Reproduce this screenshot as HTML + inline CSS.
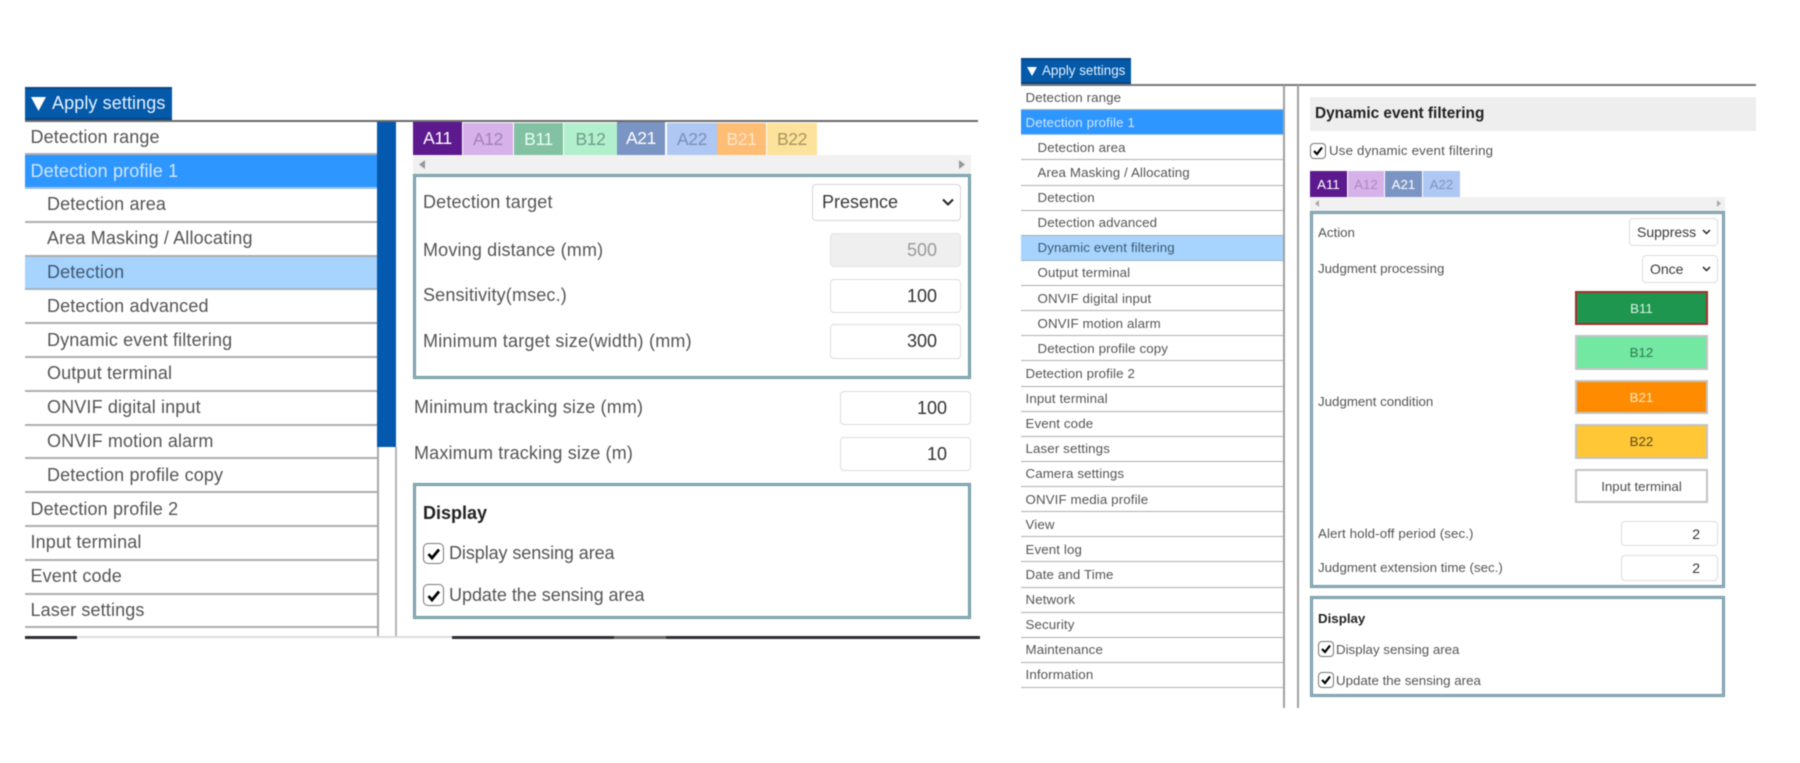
<!DOCTYPE html>
<html><head><meta charset="utf-8">
<style>
html,body{margin:0;padding:0;background:#fff}
#p{position:relative;width:1800px;height:763px;overflow:hidden;background:#fff;font-family:"Liberation Sans",sans-serif;color:#555;filter:blur(.4px)}
#p div{position:absolute;box-sizing:border-box;white-space:nowrap}
#p svg{position:absolute;overflow:visible}
.hd{background:#0459a8;border-top:2px solid #0a4584;border-bottom:2px solid #0a4584;color:#e9f3ff}
#p .r{display:flex;align-items:center;left:0;right:0;border-bottom:2px solid #aeaeae;position:relative}
#p .mn{display:block}
#p .r1{height:33.8px;font-size:18px;padding-left:5.5px;letter-spacing:.14px}
#p .r1.s{padding-left:22px}
#p .r2{height:25.13px;font-size:13.3px;padding-left:4.5px;letter-spacing:.12px;border-bottom-width:1.5px}
#p .r2.s{padding-left:16.5px}
#p .on{background:#2e96ff;color:#cfe7ff;border-bottom-color:#9cc2e6}
#p .lt{background:#a6d4ff;color:#3f5870;border-bottom-color:#a0b4c6}
#p .tab{display:flex;align-items:center;justify-content:center;letter-spacing:-.4px}
#p .box{border:3px solid #66939f;outline:1px solid #9fbcc4;outline-offset:-2px;background:#fff}
#p .lb{display:flex;align-items:center;height:24px}
#p .a{letter-spacing:.16px}
#p .ip{background:#fff;border:1.5px solid #dcdcdc;border-radius:4px;display:flex;align-items:center;justify-content:flex-end;color:#333}
#p .cb{background:#fff;border:1.5px solid #777;border-radius:5px}
#p .bt{display:flex;align-items:center;justify-content:center;font-size:13.3px;border:2px solid #c4c4c4}
</style></head><body>
<div id="p">

<!-- LEFT PANEL -->
<div class="hd" style="left:25px;top:87px;width:147px;height:33px"></div>
<svg style="left:31px;top:97px" width="15" height="14"><path d="M0 0H15L7.5 14Z" fill="#fff"/></svg>
<div style="left:52px;top:87px;height:33px;line-height:33px;font-size:18px;color:#e4f1ff;letter-spacing:.1px">Apply settings</div>
<div style="left:25px;top:120px;height:2px;background:#6a6a6a;width:953px"></div>

<div class="mn" style="left:25px;top:121.5px;width:352px;height:515px;overflow:hidden">
<div class="r r1">Detection range</div>
<div class="r r1 on">Detection profile 1</div>
<div class="r r1 s">Detection area</div>
<div class="r r1 s">Area Masking / Allocating</div>
<div class="r r1 s lt">Detection</div>
<div class="r r1 s">Detection advanced</div>
<div class="r r1 s">Dynamic event filtering</div>
<div class="r r1 s">Output terminal</div>
<div class="r r1 s">ONVIF digital input</div>
<div class="r r1 s">ONVIF motion alarm</div>
<div class="r r1 s">Detection profile copy</div>
<div class="r r1">Detection profile 2</div>
<div class="r r1">Input terminal</div>
<div class="r r1">Event code</div>
<div class="r r1">Laser settings</div>
</div>
<div style="left:377px;top:122px;width:1.5px;height:515px;background:#a8a8a8"></div>
<div style="left:377px;top:122px;width:19px;height:325px;background:#0459ae"></div>
<div style="left:395px;top:447px;width:1.5px;height:190px;background:#b5b5b5"></div>
<div style="left:25px;top:636px;width:52px;height:3px;background:#2b2f33"></div>
<div style="left:77px;top:636px;width:375px;height:2px;background:#dcdcdc"></div>
<div style="left:452px;top:636px;width:162px;height:3px;background:#2e3033"></div>
<div style="left:614px;top:636px;width:52px;height:3px;background:#6a6a6a"></div>
<div style="left:666px;top:636px;width:314px;height:3px;background:#2e3033"></div>

<!-- left tabs -->
<div class="tab" style="left:413px;top:122px;width:49px;height:33px;background:#5d1a8f;color:#fff;font-size:17.5px">A11</div>
<div class="tab" style="left:463px;top:123px;width:50px;height:32px;background:#d6b1ea;color:#a283b8;font-size:17.5px">A12</div>
<div class="tab" style="left:514px;top:123px;width:49px;height:32px;background:#82c1a2;color:#e9fff4;font-size:17.5px">B11</div>
<div class="tab" style="left:564px;top:123px;width:53px;height:32px;background:#b1efcd;color:#6d9e86;font-size:17.5px">B12</div>
<div class="tab" style="left:617px;top:122px;width:48px;height:33px;background:#7a94c4;color:#fff;font-size:17.5px">A21</div>
<div class="tab" style="left:667px;top:123px;width:50px;height:32px;background:#aec7f3;color:#7b90b5;font-size:17.5px">A22</div>
<div class="tab" style="left:717px;top:123px;width:49px;height:32px;background:#fdbd75;color:#fde6cc;font-size:17.5px">B21</div>
<div class="tab" style="left:767px;top:123px;width:50px;height:32px;background:#fde29b;color:#a8945f;font-size:17.5px">B22</div>
<div style="left:413px;top:155px;width:558px;height:19px;background:#f1f1f1"></div>
<svg style="left:419px;top:160px" width="6" height="9"><path d="M6 0V9L0 4.5Z" fill="#999"/></svg>
<svg style="left:959px;top:160px" width="6" height="9"><path d="M0 0V9L6 4.5Z" fill="#999"/></svg>

<div class="box" style="left:413px;top:174px;width:558px;height:205px"></div>
<div class="lb a" style="left:423px;top:190px;font-size:18px">Detection target</div>
<div class="ip" style="left:812px;top:184px;width:149px;height:37px;font-size:18px;justify-content:flex-start;padding-left:9px;color:#3a3a3a;border-color:#d5d5d5">Presence</div>
<svg style="left:942px;top:198px" width="12" height="8"><path d="M1 1.5L6 6.5L11 1.5" fill="none" stroke="#222" stroke-width="2"/></svg>
<div class="lb a" style="left:423px;top:238px;font-size:18px">Moving distance (mm)</div>
<div class="ip" style="left:830px;top:233px;width:131px;height:34px;background:#efefef;border-color:#e2e2e2;color:#9a9a9a;font-size:18px;padding-right:23px">500</div>
<div class="lb a" style="left:423px;top:283px;font-size:18px">Sensitivity(msec.)</div>
<div class="ip" style="left:830px;top:279px;width:131px;height:34px;font-size:18px;padding-right:23px">100</div>
<div class="lb a" style="left:423px;top:329px;font-size:18px;letter-spacing:.22px">Minimum target size(width) (mm)</div>
<div class="ip" style="left:830px;top:324px;width:131px;height:35px;font-size:18px;padding-right:23px">300</div>

<div class="lb a" style="left:414px;top:395px;font-size:18px">Minimum tracking size (mm)</div>
<div class="ip" style="left:840px;top:391px;width:131px;height:34px;font-size:18px;padding-right:23px">100</div>
<div class="lb a" style="left:414px;top:441px;font-size:18px">Maximum tracking size (m)</div>
<div class="ip" style="left:840px;top:437px;width:131px;height:34px;font-size:18px;padding-right:23px">10</div>

<div class="box" style="left:413px;top:483px;width:558px;height:136px"></div>
<div class="lb" style="left:423px;top:501px;font-size:18px;font-weight:bold;color:#222">Display</div>
<div class="cb" style="left:423px;top:543px;width:21px;height:21px"></div>
<svg style="left:423px;top:543px" width="21" height="21"><path d="M5.5 11L9 15L16 6.5" fill="none" stroke="#000" stroke-width="2.8"/></svg>
<div class="lb" style="left:449px;top:541px;font-size:18px;letter-spacing:-.08px">Display sensing area</div>
<div class="cb" style="left:423px;top:584px;width:21px;height:22px"></div>
<svg style="left:423px;top:585px" width="21" height="21"><path d="M5.5 11L9 15L16 6.5" fill="none" stroke="#000" stroke-width="2.8"/></svg>
<div class="lb" style="left:449px;top:583px;font-size:18px;letter-spacing:-.03px">Update the sensing area</div>

<!-- RIGHT PANEL -->
<div class="hd" style="left:1021px;top:58px;width:110px;height:26px"></div>
<svg style="left:1027px;top:67px" width="10" height="9"><path d="M0 0H10L5 9Z" fill="#fff"/></svg>
<div style="left:1042px;top:58px;height:26px;line-height:26px;font-size:13.4px;color:#e4f1ff">Apply settings</div>
<div style="left:1021px;top:84px;width:735px;height:1.5px;background:#777"></div>

<div class="mn" style="left:1021px;top:85px;width:262px;height:604px;overflow:hidden">
<div class="r r2">Detection range</div>
<div class="r r2 on">Detection profile 1</div>
<div class="r r2 s">Detection area</div>
<div class="r r2 s">Area Masking / Allocating</div>
<div class="r r2 s">Detection</div>
<div class="r r2 s">Detection advanced</div>
<div class="r r2 s lt">Dynamic event filtering</div>
<div class="r r2 s">Output terminal</div>
<div class="r r2 s">ONVIF digital input</div>
<div class="r r2 s">ONVIF motion alarm</div>
<div class="r r2 s">Detection profile copy</div>
<div class="r r2">Detection profile 2</div>
<div class="r r2">Input terminal</div>
<div class="r r2">Event code</div>
<div class="r r2">Laser settings</div>
<div class="r r2">Camera settings</div>
<div class="r r2">ONVIF media profile</div>
<div class="r r2">View</div>
<div class="r r2">Event log</div>
<div class="r r2">Date and Time</div>
<div class="r r2">Network</div>
<div class="r r2">Security</div>
<div class="r r2">Maintenance</div>
<div class="r r2">Information</div>
</div>
<div style="left:1283px;top:85px;width:1.5px;height:623px;background:#a0a0a0"></div>
<div style="left:1297px;top:85px;width:1.5px;height:623px;background:#a0a0a0"></div>

<div style="left:1310px;top:97px;width:446px;height:34px;background:#eee"></div>
<div style="left:1315px;top:97px;height:34px;line-height:34px;font-size:15.4px;font-weight:bold;color:#222">Dynamic event filtering</div>
<div class="cb" style="left:1310px;top:143px;width:16px;height:15.5px;border-radius:4px;border-width:1.2px"></div>
<svg style="left:1310px;top:143px" width="16" height="16"><path d="M4 8L7 11L12 4.5" fill="none" stroke="#000" stroke-width="2.2"/></svg>
<div class="lb" style="left:1329px;top:138px;font-size:13.3px;letter-spacing:.17px">Use dynamic event filtering</div>

<div class="tab" style="left:1310px;top:171px;width:37px;height:26px;background:#5d1a8f;color:#fff;font-size:13.3px;letter-spacing:0">A11</div>
<div class="tab" style="left:1348px;top:171px;width:36px;height:26px;background:#d6b1ea;color:#a98bbe;font-size:13.3px;letter-spacing:0">A12</div>
<div class="tab" style="left:1385px;top:171px;width:37px;height:26px;background:#7a94c4;color:#fff;font-size:13.3px;letter-spacing:0">A21</div>
<div class="tab" style="left:1423px;top:171px;width:37px;height:26px;background:#aec7f3;color:#7f94b9;font-size:13.3px;letter-spacing:0">A22</div>
<div style="left:1310px;top:197px;width:415px;height:14px;background:#f1f1f1"></div>
<svg style="left:1315px;top:200px" width="4" height="7"><path d="M4 0V7L0 3.5Z" fill="#aaa"/></svg>
<svg style="left:1717px;top:200px" width="4" height="7"><path d="M0 0V7L4 3.5Z" fill="#aaa"/></svg>

<div class="box" style="left:1310px;top:211px;width:415px;height:377px;border-color:#6d94a4"></div>
<div class="lb" style="left:1318px;top:220px;font-size:13.3px">Action</div>
<div class="ip" style="left:1629px;top:218px;width:89px;height:28px;font-size:14px;justify-content:flex-start;padding-left:7px;color:#3a3a3a">Suppress</div>
<svg style="left:1702px;top:229px" width="9" height="6"><path d="M1 1L4.5 4.5L8 1" fill="none" stroke="#222" stroke-width="1.5"/></svg>
<div class="lb" style="left:1318px;top:256px;font-size:13.3px">Judgment processing</div>
<div class="ip" style="left:1642px;top:255px;width:76px;height:28px;font-size:14px;justify-content:flex-start;padding-left:7px;color:#3a3a3a">Once</div>
<svg style="left:1702px;top:266px" width="9" height="6"><path d="M1 1L4.5 4.5L8 1" fill="none" stroke="#222" stroke-width="1.5"/></svg>

<div class="bt" style="left:1575px;top:291px;width:133px;height:34px;background:#1f9650;border-color:#a5302c;color:#d8f5e4">B11</div>
<div class="bt" style="left:1575px;top:335px;width:133px;height:34.5px;background:#72e8a2;color:#2f7a50">B12</div>
<div class="bt" style="left:1575px;top:380px;width:133px;height:34px;background:#ff8c00;color:#ffe9cc">B21</div>
<div class="bt" style="left:1575px;top:424px;width:133px;height:35px;background:#ffc636;color:#5e4a18">B22</div>
<div class="bt" style="left:1575px;top:469px;width:133px;height:34px;background:#fff;color:#4d4d4d">Input terminal</div>
<div class="lb" style="left:1318px;top:389px;font-size:13.3px">Judgment condition</div>

<div class="lb" style="left:1318px;top:521px;font-size:13.3px;letter-spacing:.1px">Alert hold-off period (sec.)</div>
<div class="ip" style="left:1621px;top:521px;width:97px;height:25px;font-size:14px;padding-right:17px">2</div>
<div class="lb" style="left:1318px;top:555px;font-size:13.3px">Judgment extension time (sec.)</div>
<div class="ip" style="left:1621px;top:555px;width:97px;height:25.5px;font-size:14px;padding-right:17px">2</div>

<div class="box" style="left:1310px;top:596px;width:415px;height:101px;border-color:#6d94a4"></div>
<div class="lb" style="left:1318px;top:606px;font-size:13.3px;font-weight:bold;color:#222">Display</div>
<div class="cb" style="left:1318px;top:641px;width:15.5px;height:16px;border-radius:4px;border-width:1.2px"></div>
<svg style="left:1318px;top:641px" width="16" height="16"><path d="M4 8L7 11L12 4.5" fill="none" stroke="#000" stroke-width="2.2"/></svg>
<div class="lb" style="left:1336px;top:637px;font-size:13.3px">Display sensing area</div>
<div class="cb" style="left:1318px;top:672px;width:15.5px;height:16px;border-radius:4px;border-width:1.2px"></div>
<svg style="left:1318px;top:672px" width="16" height="16"><path d="M4 8L7 11L12 4.5" fill="none" stroke="#000" stroke-width="2.2"/></svg>
<div class="lb" style="left:1336px;top:668px;font-size:13.3px">Update the sensing area</div>

</div>
</body></html>
